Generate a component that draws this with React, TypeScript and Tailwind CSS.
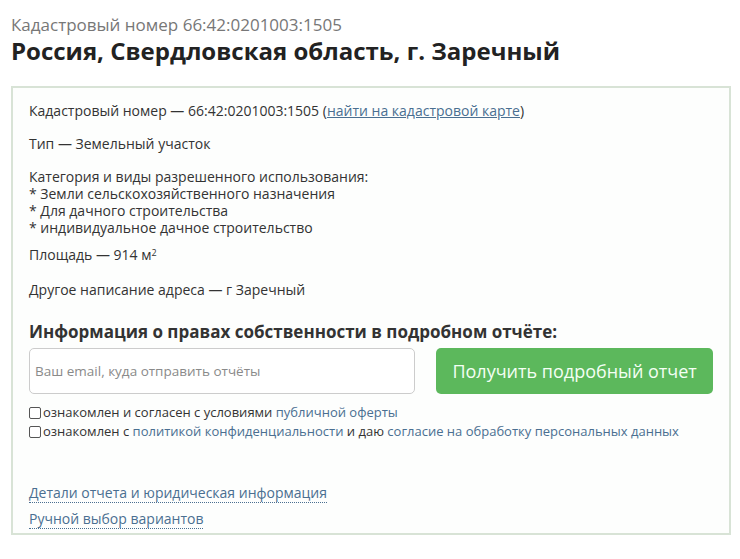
export default function App() {
  const link = 'text-[#4a6f91]'
  return (
    <div className="min-h-[559px] bg-white pl-[11px] pr-[9px] pt-[14px] font-['Open_Sans',sans-serif] text-[#333]">
      <p className="text-[17px] leading-[22px] text-[#777]">Кадастровый номер 66:42:0201003:1505</p>
      <h1 className="text-[24px] font-bold leading-[30px] text-[#222]">Россия, Свердловская область, г. Заречный</h1>

      <div className="mt-[20px] border-2 border-[#d8e3d6] bg-[#fdfefd] px-[16px] pb-[4px] pt-[14px] text-[14px] leading-[17px]">
        <p>
          Кадастровый номер — 66:42:0201003:1505 (
          <a href="#" className={`${link} underline`}>найти на кадастровой карте</a>)
        </p>
        <p className="mt-[16px]">Тип — Земельный участок</p>
        <p className="mt-[16px]">
          Категория и виды разрешенного использования:
          <br />* Земли сельскохозяйственного назначения
          <br />* Для дачного строительства
          <br />* индивидуальное дачное строительство
        </p>
        <p className="mt-[10px]">
          Площадь — 914 м<sup className="text-[9px]">2</sup>
        </p>
        <p className="mt-[18px]">Другое написание адреса — г Заречный</p>

        <h2 className="mt-[23px] text-[17px] font-bold leading-[22px] text-[#333]">
          Информация о правах собственности в подробном отчёте:
        </h2>
        <div className="mt-[5px] flex gap-[21px]">
          <input
            type="text"
            placeholder="Ваш email, куда отправить отчёты"
            className="h-[46px] w-[388px] rounded-[5px] border border-[#ccc] bg-white px-[5px] text-[13.5px] outline-none placeholder:text-[#8a8a8a]"
          />
          <button className="h-[46px] w-[278px] rounded-[5px] bg-[#5cb85c] text-[18px] text-[#f4fff4]">
            Получить подробный отчет
          </button>
        </div>

        <div className="mt-[9px] text-[13px] leading-[19px]">
          <label className="flex items-center">
            <span className="mr-[2px] inline-block h-[12px] w-[12px] rounded-[2px] border border-[#555] bg-white" />
            <span>
              ознакомлен и согласен с условиями <a href="#" className={link}>публичной оферты</a>
            </span>
          </label>
          <label className="flex items-center">
            <span className="mr-[2px] inline-block h-[12px] w-[12px] rounded-[2px] border border-[#555] bg-white" />
            <span>
              ознакомлен с <a href="#" className={link}>политикой конфиденциальности</a> и даю{' '}
              <a href="#" className={link}>согласие на обработку персональных данных</a>
            </span>
          </label>
        </div>

        <div className="mt-[42px] flex flex-col items-start gap-[6px] text-[14px] leading-[19px]">
          <a href="#" className={`${link} border-b border-dotted border-[#4a6f91]`}>
            Детали отчета и юридическая информация
          </a>
          <a href="#" className={`${link} border-b border-dotted border-[#4a6f91]`}>
            Ручной выбор вариантов
          </a>
        </div>
      </div>
    </div>
  )
}
